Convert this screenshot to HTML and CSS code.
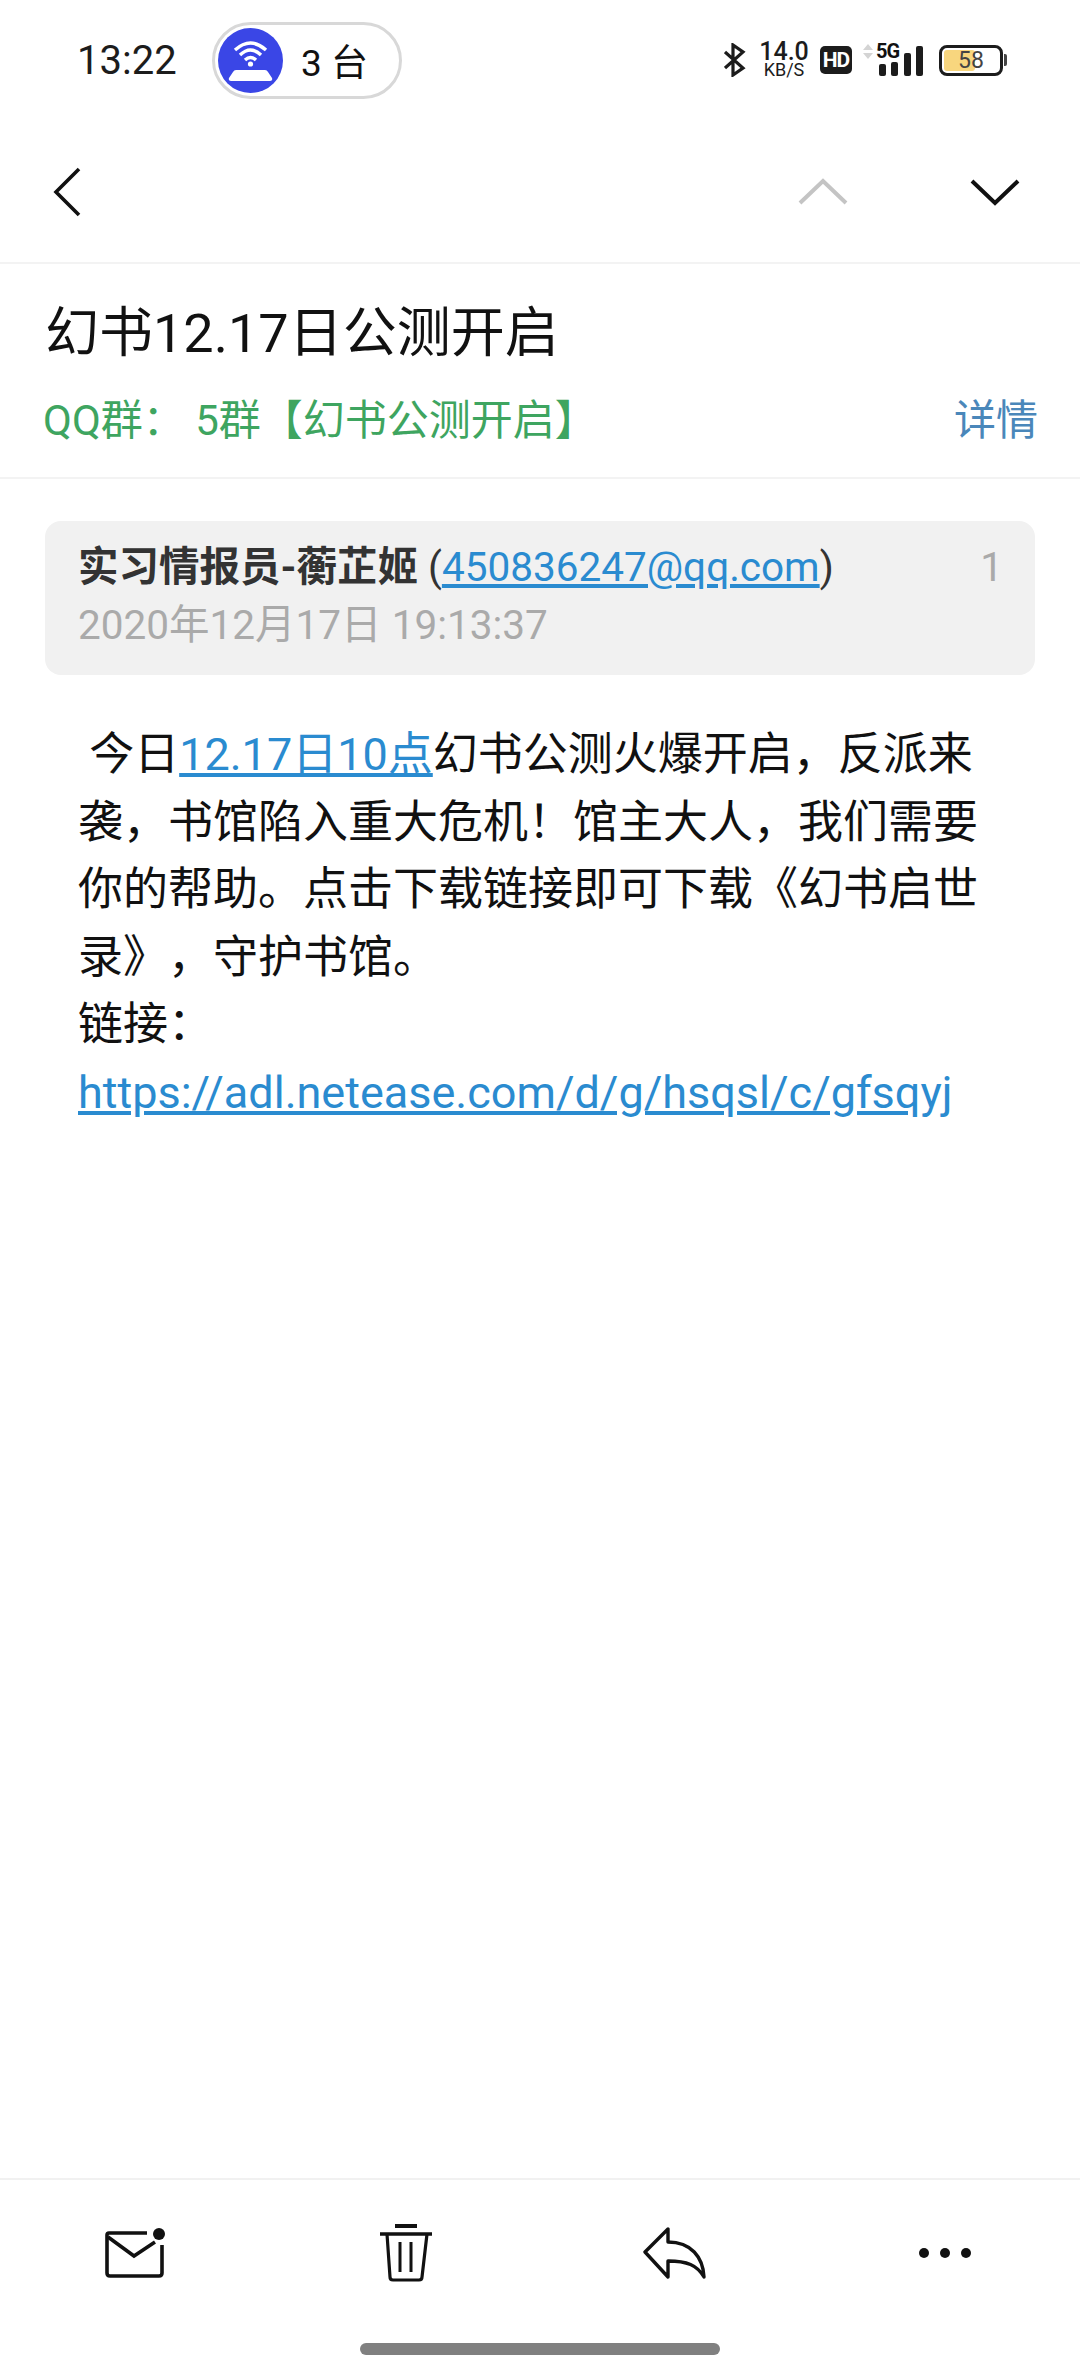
FILE: index.html
```html
<!DOCTYPE html>
<html lang="zh-CN">
<head>
    <meta charset="UTF-8">
    <title>幻书12.17日公测开启</title>
    <link rel="stylesheet" href="styles.css">
</head>
<body>
<div class="page">
    <div class="status">
        <span class="time">13:22</span>
        <div class="pill">
            <svg class="pill-icon" viewBox="0 0 65 65">
                <circle cx="32.5" cy="32.5" r="32.5" fill="#3a46e6"/>
                <path d="M17 22 Q32.5 8 48 22" fill="none" stroke="#fff" stroke-width="3.4"/>
                <path d="M22 27 Q32.5 17 43 27" fill="none" stroke="#fff" stroke-width="3.4"/>
                <path d="M27 32 Q32.5 27 38 32" fill="none" stroke="#fff" stroke-width="3.4"/>
                <circle cx="32.5" cy="36" r="2.6" fill="#fff"/>
                <path d="M18 42 H47 Q49 42 50 44 L54 50 Q55 53 52 53 H13 Q10 53 11 50 L15 44 Q16 42 18 42 Z" fill="#fff"/>
            </svg>
            <span class="pill-text">3 台</span>
        </div>
        <div class="status-right">
            <svg class="bt" viewBox="0 0 22 34">
                <path d="M1 9 L19 25 L9 32 V2 L19 9 L1 25" fill="none" stroke="#1c1c1c" stroke-width="3.2"/>
            </svg>
            <div class="speed">
                <span class="speed-num">14.0</span>
                <span class="speed-unit">KB/S</span>
            </div>
            <span class="hd">HD</span>
            <div class="signal">
                <svg class="updown" viewBox="0 0 10 16">
                    <path d="M5 0 L10 6 H0 Z M0 9 H10 L5 15 Z" fill="#d4d4d4"/>
                </svg>
                <span class="five-g">5G</span>
                <div class="bars">
                    <i class="bar b1"></i>
                    <i class="bar b2"></i>
                    <i class="bar b3"></i>
                    <i class="bar b4"></i>
                </div>
            </div>
            <div class="battery">
                <div class="battery-fill"></div>
                <span class="battery-num">58</span>
            </div>
            <i class="battery-nub"></i>
        </div>
    </div>

    <div class="nav">
        <svg class="back" viewBox="0 0 28 50">
            <path d="M26 2 L3 25 L26 48" fill="none" stroke="#111" stroke-width="3.6"/>
        </svg>
        <svg class="arrow arrow-up" viewBox="0 0 50 28">
            <path d="M2 25 L25 3 L48 25" fill="none" stroke="#c4c4c4" stroke-width="4"/>
        </svg>
        <svg class="arrow" viewBox="0 0 50 28">
            <path d="M2 3 L25 25 L48 3" fill="none" stroke="#111" stroke-width="4"/>
        </svg>
    </div>

    <div class="head">
        <div class="title">幻书12.17日公测开启</div>
        <div class="head-row">
            <span class="group">QQ群：&nbsp;5群【幻书公测开启】</span>
            <span class="detail">详情</span>
        </div>
    </div>

    <div class="card">
        <div class="card-top">
            <div class="sender"><b>实习情报员-蘅芷姬</b> (<a>450836247@qq.com</a>)</div>
            <span class="num">1</span>
        </div>
        <div class="date">2020年12月17日 19:13:37</div>
    </div>

    <div class="content">
        <div>&nbsp;今日<a>12.17日10点</a>幻书公测火爆开启，反派来袭，书馆陷入重大危机！馆主大人，我们需要你的帮助。点击下载链接即可下载《幻书启世录》，守护书馆。</div>
        <div>链接：</div>
        <div><a>https://adl.netease.com/d/g/hsqsl/c/gfsqyj</a></div>
    </div>

    <div class="toolbar">
        <div class="tool">
            <svg class="ico-mail" viewBox="0 0 62 50">
                <path d="M42 5 H4 Q2 5 2 7 V45 Q2 48 5 48 H54 Q57 48 57 45 V17" fill="none" stroke="#111" stroke-width="3.6"/>
                <path d="M3 9 L29 28 L50 14" fill="none" stroke="#111" stroke-width="3.6"/>
                <circle cx="54" cy="6" r="6" fill="#111"/>
            </svg>
        </div>
        <div class="tool">
            <svg class="ico-trash" viewBox="0 0 52 58">
                <path d="M15 2 H37" stroke="#111" stroke-width="4"/>
                <path d="M0 10 H52" stroke="#111" stroke-width="3.6"/>
                <path d="M7 10 L10 53 Q10 56 13 56 H39 Q42 56 42 53 L47 10" fill="none" stroke="#111" stroke-width="3.2"/>
                <path d="M20 18 V48 M31 18 V48" stroke="#111" stroke-width="3"/>
            </svg>
        </div>
        <div class="tool">
            <svg class="ico-reply" viewBox="0 0 64 52">
                <path d="M2 25 L25 2 V15 C48 15 60 30 61 50 C54 38 44 34 25 34 V50 Z" fill="none" stroke="#111" stroke-width="3.4" stroke-linejoin="round"/>
            </svg>
        </div>
        <div class="tool">
            <div class="dots"><i></i><i></i><i></i></div>
        </div>
    </div>
    <div class="home-bar"></div>
</div>
</body>
</html>
```

FILE: styles.css
```css
*{
    margin: 0;
    padding: 0;
    box-sizing: border-box;
}
body{
    background: #fff;
    font-family: Roboto, "Noto Sans CJK SC", sans-serif;
    color: #111;
    text-spacing-trim: space-all;
}
.page{
    width: 1080px;
    height: 2376px;
    display: flex;
    flex-direction: column;
    overflow: hidden;
}

/* status bar */
.status{
    height: 120px;
    display: flex;
    align-items: center;
    padding: 0 73px 0 77px;
}
.time{
    font-size: 40px;
    width: 135px;
    color: #1c1c1c;
}
.pill{
    width: 190px;
    height: 77px;
    border: 3px solid #d8d8d8;
    border-radius: 39px;
    display: flex;
    align-items: center;
    padding-left: 3px;
}
.pill-icon{
    width: 65px;
    height: 65px;
}
.pill-text{
    font-size: 37px;
    margin-left: 18px;
    color: #111;
}
.status-right{
    margin-left: auto;
    display: flex;
    align-items: center;
}
.bt{
    width: 22px;
    height: 34px;
}
.speed{
    width: 48px;
    margin-left: 14px;
    display: flex;
    flex-direction: column;
    align-items: center;
    color: #1c1c1c;
}
.speed-num{
    font-size: 25px;
    line-height: 20px;
    font-weight: 500;
}
.speed-unit{
    font-size: 18px;
    line-height: 16px;
}
.hd{
    width: 32px;
    height: 28px;
    margin-left: 12px;
    background: #1c1c1c;
    border-radius: 5px;
    color: #fff;
    font-size: 21px;
    line-height: 28px;
    font-weight: 700;
    text-align: center;
    letter-spacing: -1px;
}
.signal{
    width: 60px;
    height: 32px;
    margin-left: 11px;
    position: relative;
}
.updown{
    position: absolute;
    left: 0;
    top: 0;
    width: 10px;
    height: 16px;
}
.five-g{
    position: absolute;
    left: 13px;
    top: -3px;
    font-size: 20px;
    line-height: 20px;
    font-weight: 700;
    letter-spacing: -1px;
}
.bars{
    position: absolute;
    right: 0;
    bottom: 0;
    display: flex;
    align-items: flex-end;
    gap: 5.5px;
}
.bar{
    display: block;
    width: 7px;
    background: #1c1c1c;
    border-radius: 2px;
}
.b1{ height: 12px; }
.b2{ height: 14px; }
.b3{ height: 23px; }
.b4{ height: 30px; }
.battery{
    width: 64px;
    height: 31px;
    margin-left: 16px;
    border: 3px solid #1c1c1c;
    border-radius: 8px;
    position: relative;
    overflow: hidden;
    text-align: center;
}
.battery-fill{
    position: absolute;
    left: 2px;
    top: 2px;
    bottom: 2px;
    width: 31px;
    background: #f8d67e;
    border-radius: 3px;
}
.battery-num{
    position: relative;
    font-size: 23px;
    line-height: 25px;
    display: block;
    color: #444;
}
.battery-nub{
    display: block;
    width: 3px;
    height: 12px;
    margin-left: 1px;
    background: #444;
    border-radius: 0 2px 2px 0;
}

/* nav */
.nav{
    height: 144px;
    display: flex;
    align-items: center;
    padding: 2px 60px 0 53px;
    border-bottom: 2px solid #f3f3f3;
}
.back{
    width: 28px;
    height: 50px;
    margin-right: auto;
}
.arrow{
    width: 50px;
    height: 28px;
}
.arrow-up{
    margin-right: 122px;
}

/* subject */
.head{
    padding: 35px 42px 28px 45px;
    border-bottom: 2px solid #f3f3f3;
}
.title{
    font-size: 54px;
    line-height: 70px;
    color: #111;
}
.head-row{
    margin-top: 24px;
    display: flex;
    justify-content: space-between;
    font-size: 42px;
    line-height: 56px;
}
.group{
    color: #3ea560;
    margin-left: -2px;
}
.detail{
    color: #4a87ba;
}

/* sender card */
.card{
    margin: 42px 45px 0;
    height: 154px;
    padding: 22px 30px 0 33px;
    background: #f1f1f1;
    border-radius: 16px;
    font-size: 40.5px;
}
.card-top{
    display: flex;
    justify-content: space-between;
    line-height: 48px;
}
.sender{
    color: #333;
}
.sender b{
    font-weight: 700;
}
.sender a,
.content a{
    color: #2a8bd0;
    text-decoration: underline;
}
.num{
    color: #aaa;
    margin-right: 2px;
}
.date{
    margin-top: 9px;
    line-height: 50px;
    color: #aaa;
}

/* mail text */
.content{
    flex: 1;
    padding: 46px 95px 0 78px;
    font-size: 45px;
    line-height: 67.5px;
    color: #111;
}

/* bottom toolbar */
.toolbar{
    height: 152px;
    flex-shrink: 0;
    display: grid;
    grid-template-columns: repeat(4, 1fr);
    align-items: center;
    padding: 0 0 5px 1px;
    border-top: 2px solid #f1f1f1;
}
.tool{
    display: flex;
    justify-content: center;
}
.ico-mail{
    width: 62px;
    height: 50px;
}
.ico-trash{
    width: 52px;
    height: 58px;
}
.ico-reply{
    width: 64px;
    height: 52px;
}
.dots{
    display: flex;
    gap: 11px;
}
.dots i{
    display: block;
    width: 10px;
    height: 10px;
    border-radius: 50%;
    background: #111;
}
.home-bar{
    width: 360px;
    height: 12px;
    flex-shrink: 0;
    margin: 13px auto 21px;
    background: #808080;
    border-radius: 6px;
}
```
